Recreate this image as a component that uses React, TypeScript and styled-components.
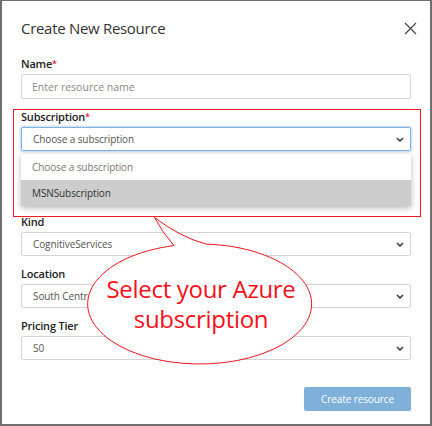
import React from "react";
import styled, { createGlobalStyle } from "styled-components";

const GlobalStyle = createGlobalStyle`
  html, body {
    margin: 0;
    padding: 0;
    background: #ffffff;
  }
  * {
    box-sizing: border-box;
  }
`;

const Frame = styled.div`
  position: relative;
  width: 432px;
  height: 426px;
  border: 1px solid #6f6f6f;
  border-width: 1px 2px 2px 2px;
  padding: 15px 19px 0 19px;
  background: #fff;
  font-family: "Open Sans", "Noto Sans", sans-serif;
  color: #333;
  overflow: hidden;
`;

const Header = styled.div`
  display: flex;
  align-items: center;
  justify-content: space-between;
  height: 24px;
  margin-bottom: 17px;
`;

const Title = styled.h1`
  margin: 0;
  font-size: 15px;
  line-height: 24px;
  font-weight: 400;
  letter-spacing: -0.3px;
  color: #333;
`;

const CloseButton = styled.button`
  display: flex;
  align-items: center;
  justify-content: center;
  width: 14px;
  height: 14px;
  margin-right: -6px;
  padding: 0;
  border: 0;
  background: none;
  color: #444;
`;

const Form = styled.div`
  display: flex;
  flex-direction: column;
`;

const Field = styled.div<{ $gap?: number }>`
  display: flex;
  flex-direction: column;
  margin-bottom: ${(p) => p.$gap ?? 11}px;
`;

const Label = styled.label`
  font-size: 11px;
  line-height: 14px;
  font-weight: 600;
  letter-spacing: -0.2px;
  color: #222;
  margin-bottom: 3px;
`;

const Req = styled.span`
  color: #e0262b;
  font-size: 9px;
  vertical-align: top;
`;

const TextInput = styled.input`
  height: 25px;
  width: 100%;
  padding: 0 10px;
  border: 1px solid #d3d3d3;
  border-radius: 2px;
  font-family: inherit;
  font-size: 10.5px;
  color: #555;
  outline: none;
  &::placeholder {
    color: #8a8a8a;
  }
`;

const SelectBox = styled.div<{ $focused?: boolean }>`
  display: flex;
  align-items: center;
  justify-content: space-between;
  height: 24px;
  padding: 0 6px 0 11px;
  border: 1px solid ${(p) => (p.$focused ? "#80b3e2" : "#d3d3d3")};
  border-radius: 2px;
  box-shadow: ${(p) => (p.$focused ? "0 0 2px 1px rgba(120, 170, 225, 0.45)" : "none")};
  font-size: 10px;
  letter-spacing: -0.1px;
  color: #555;
`;

const Highlight = styled.div`
  position: relative;
  display: flex;
  flex-direction: column;
  margin-bottom: 9px;
  &::before {
    content: "";
    position: absolute;
    top: -1px;
    left: -8px;
    right: -10px;
    bottom: -11px;
    border: 1px solid #ea1c24;
    pointer-events: none;
  }
`;

const Listbox = styled.div`
  margin-top: 3px;
  display: flex;
  flex-direction: column;
  background: #fff;
  box-shadow: 0 2px 6px rgba(0, 0, 0, 0.28);
`;

const Option = styled.div<{ $active?: boolean }>`
  height: 26px;
  display: flex;
  align-items: center;
  padding: 0 11px;
  font-size: 10px;
  letter-spacing: -0.1px;
  color: ${(p) => (p.$active ? "#333" : "#777")};
  background: ${(p) => (p.$active ? "#cdcdcd" : "#fff")};
`;

const Footer = styled.div`
  display: flex;
  justify-content: flex-end;
  margin-top: 27px;
`;

const PrimaryButton = styled.button`
  width: 107px;
  height: 24px;
  border: 0;
  border-radius: 2px;
  background: #7eb0da;
  color: #fff;
  font-family: inherit;
  font-size: 10px;
  letter-spacing: -0.1px;
  padding: 0;
`;

const Callout = styled.div`
  position: absolute;
  inset: 0;
  pointer-events: none;
`;

const CalloutShape = styled.svg`
  position: absolute;
  left: 0;
  top: 0;
`;

const CalloutText = styled.div`
  position: absolute;
  left: 89px;
  top: 273px;
  width: 220px;
  text-align: center;
  font-size: 24px;
  line-height: 30px;
  letter-spacing: -0.3px;
  color: #f5101a;
`;

const Chevron = () => (
  <svg width="8" height="5" viewBox="0 0 8 5">
    <path d="M1 1 L4 4 L7 1" fill="none" stroke="#333" strokeWidth="1.5" />
  </svg>
);

const Select = ({ value, focused }: { value: string; focused?: boolean }) => (
  <SelectBox $focused={focused}>
    <span>{value}</span>
    <Chevron />
  </SelectBox>
);

export default function App() {
  return (
    <Frame>
      <GlobalStyle />
      <Header>
        <Title>Create New Resource</Title>
        <CloseButton aria-label="Close">
          <svg width="13" height="13" viewBox="0 0 13 13">
            <path d="M1 1 L12 12 M12 1 L1 12" stroke="#444" strokeWidth="1.2" fill="none" />
          </svg>
        </CloseButton>
      </Header>
      <Form>
        <Field>
          <Label>
            Name<Req>*</Req>
          </Label>
          <TextInput placeholder="Enter resource name" />
        </Field>
        <Highlight>
          <Label>
            Subscription<Req>*</Req>
          </Label>
          <Select value="Choose a subscription" focused />
          <Listbox>
            <Option>Choose a subscription</Option>
            <Option $active>MSNSubscription</Option>
          </Listbox>
        </Highlight>
        <Field>
          <Label>Kind</Label>
          <Select value="CognitiveServices" />
        </Field>
        <Field>
          <Label>Location</Label>
          <Select value="South Central US" />
        </Field>
        <Field $gap={0}>
          <Label>Pricing Tier</Label>
          <Select value="S0" />
        </Field>
      </Form>
      <Footer>
        <PrimaryButton disabled>Create resource</PrimaryButton>
      </Footer>
      <Callout>
        <CalloutShape width="432" height="426" viewBox="0 0 432 426">
          <path
            d="M172 244.6 Q160 231 152.5 216.5 Q178 236 204 243.1 A112 60 0 1 1 172 244.6 Z"
            fill="#fff"
            stroke="#f0141e"
            strokeWidth="1"
          />
        </CalloutShape>
        <CalloutText>
          Select your Azure
          <br />
          subscription
        </CalloutText>
      </Callout>
    </Frame>
  );
}
